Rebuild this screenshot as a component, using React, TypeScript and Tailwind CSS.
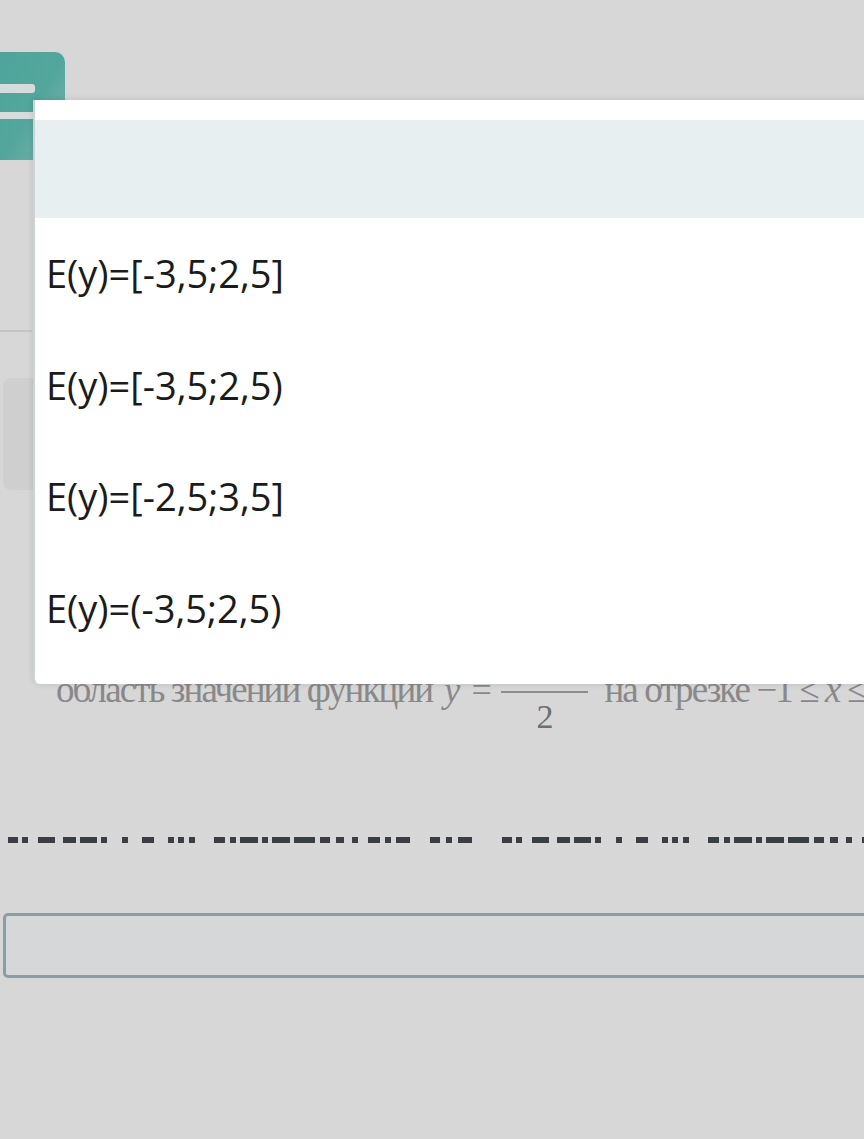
import React from "react";

const options = [
  "E(y)=[-3,5;2,5]",
  "E(y)=[-3,5;2,5)",
  "E(y)=[-2,5;3,5]",
  "E(y)=(-3,5;2,5)",
];

// segments of the blurred line of text, x start and end
const dashRun: [number, number][] = [
  [8, 18], [22, 28], [38, 55], [63, 76], [80, 97], [101, 107], [122, 128],
  [142, 154], [168, 174], [178, 184], [189, 195], [214, 225], [230, 236],
  [240, 258], [262, 268], [272, 290], [294, 315], [320, 330], [336, 344],
  [352, 358], [368, 380], [385, 391], [396, 410], [430, 440], [446, 452],
  [458, 472],
];

function Dashes() {
  const all = [...dashRun, ...dashRun.map(([a, b]) => [a + 494, b + 494] as [number, number])];
  return (
    <svg width="864" height="8" viewBox="0 0 864 8" className="block">
      {all.map(([a, b], i) => (
        <rect key={i} x={a} y={1} width={b - a} height={6} fill="#3a3e43" />
      ))}
    </svg>
  );
}

function App() {
  return (
    <div className="relative w-[864px] h-[1139px] overflow-hidden bg-[#d7d7d7] font-['Open_Sans',sans-serif]">
      <div className="flex flex-col">
        {/* menu button */}
        <div className="mt-[52px] h-[108px] w-[65px] rounded-tr-[10px] bg-gradient-to-br from-[#4fa59b] via-[#52a69c] to-[#7cb3ad] flex flex-col pt-[32px] gap-[19px]">
          <div className="h-[9px] w-[35px] rounded-r-[3px] bg-[#d6dcdb]" />
          <div className="h-[7px] w-[34px] bg-[#d6dcdb]" />
        </div>

        <div className="mt-[170px] h-[2px] w-[32px] bg-[#c5c5c5]" />

        <div className="mt-[46px] ml-[3px] h-[112px] w-[40px] rounded-[8px] bg-[#cfcfd0]" />

        {/* question line */}
        <div className="mt-[181px] flex items-start h-[72px] pl-[56px] font-['Liberation_Serif',serif] text-[#898989] whitespace-nowrap overflow-hidden">
          <span className="text-[37px] leading-[38px] tracking-[-1.9px]">область значений функции</span>
          <span className="text-[36px] leading-[38px] italic ml-[12px]">y =</span>
          <span className="ml-[8px] flex flex-col items-center w-[87px] shrink-0">
            <span className="mt-[20px] h-[2px] w-[87px] bg-[#8c8c8c]" />
            <span className="text-[34px] leading-[34px] mt-[7px] text-[#6f6f6f]">2</span>
          </span>
          <span className="text-[37px] leading-[38px] ml-[16px] tracking-[-1.9px]">
            на отрезке −1 ≤ <i>x</i> ≤ 1
          </span>
        </div>

        <div className="mt-[93px]">
          <Dashes />
        </div>

        <div className="mt-[69px] ml-[3px] h-[65px] w-[900px] shrink-0 rounded-[5px] border-[3px] border-[#899ea3] bg-[#d5d7d9]" />
      </div>

      {/* dropdown */}
      <div className="absolute left-[33px] top-[100px] right-[-20px] h-[584px] rounded-bl-[6px] border-l-[2px] border-[#c9d5d5] bg-white shadow-[0_0_6px_rgba(0,0,0,0.12)] pt-[20px]">
        <div className="h-[98px] bg-[#e8eff1]" />
        {options.map((o) => (
          <div key={o} className="h-[111.5px] flex items-center pl-[11px] text-[38px] text-[#1b1b1b]">
            {o}
          </div>
        ))}
      </div>
    </div>
  );
}

export default App;
